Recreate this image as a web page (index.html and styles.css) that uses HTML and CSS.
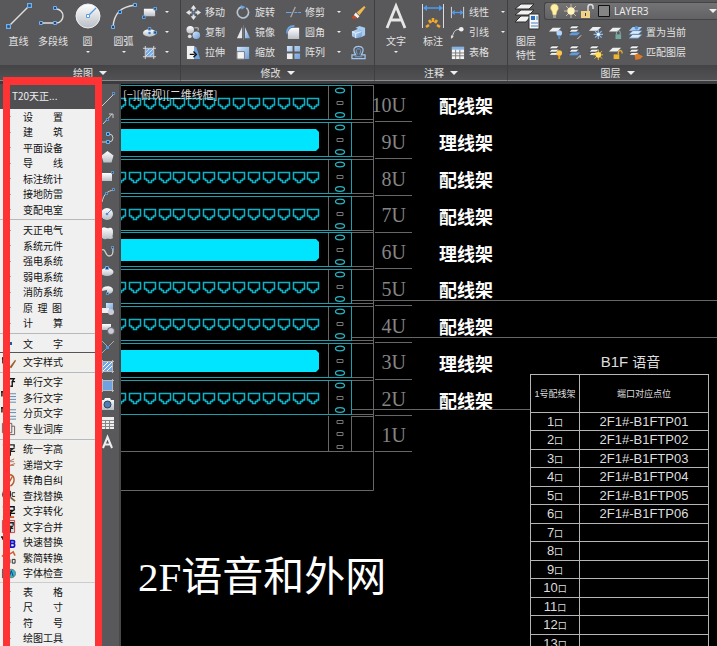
FILE: index.html
```html
<!DOCTYPE html>
<html lang="zh-CN">
<head>
<meta charset="utf-8">
<title>T20天正电气</title>
<link rel="stylesheet" href="styles.css">
</head>
<body>
<svg class="defs" aria-hidden="true">
  <defs>
    <linearGradient id="ball" x1="0" y1="0" x2="0" y2="1"><stop offset="0" stop-color="#fff"/><stop offset="1" stop-color="#b9bec6"/></linearGradient>
    <linearGradient id="blue" x1="0" y1="0" x2="1" y2="1"><stop offset="0" stop-color="#d3e6fb"/><stop offset="1" stop-color="#6d9fd8"/></linearGradient>
    <symbol id="node" viewBox="0 0 4 4"><path d="M.5.5h3v3h-3z" fill="#24486e" stroke="#6fb0f2"/></symbol>
    <symbol id="layers" viewBox="0 0 14 14"><path d="M4 1h8L9 4H1zM4 4.500h8L9 7.500H1zM4 8h8l-3 3H1z" fill="#eef0f2" stroke="#333" stroke-width=".6"/></symbol>
    <symbol id="port" viewBox="0 0 14 13"><path d="M1.500 1.500h11v6.500h-2v1.500h-2v2h-3v-2h-2V8h-2z" fill="none" stroke="#0bb3c8" stroke-width="1.500"/></symbol>
    <g id="ports">
      <use href="#port" x="-8" width="14" height="13"/><use href="#port" x="7" width="14" height="13"/><use href="#port" x="22" width="14" height="13"/><use href="#port" x="37" width="14" height="13"/><use href="#port" x="51" width="14" height="13"/><use href="#port" x="66" width="14" height="13"/><use href="#port" x="81" width="14" height="13"/><use href="#port" x="96" width="14" height="13"/><use href="#port" x="111" width="14" height="13"/><use href="#port" x="126" width="14" height="13"/><use href="#port" x="141" width="14" height="13"/><use href="#port" x="156" width="14" height="13"/><use href="#port" x="171" width="14" height="13"/><use href="#port" x="185" width="14" height="13"/>
    </g>
    <g id="frame" fill="none">
      <path d="M230 .5h22.500v34H230M207.500 0v35" stroke="#666"/>
      <path d="M0 .5h230.500M0 34.500h230.500M230.500 0v35" stroke="#1d9fae"/>
      <path d="M216 16.500h6v3h-6z" stroke="#777"/>
      <ellipse cx="219" cy="5.500" rx="4.500" ry="2.300" stroke="#26b4c2" stroke-width="1.300"/>
      <ellipse cx="219" cy="30" rx="4.500" ry="2.300" stroke="#26b4c2" stroke-width="1.300"/>
    </g>
    <g id="patch"><use href="#frame"/><use href="#ports" y="12"/></g>
    <g id="manager"><use href="#frame"/><path d="M0 7h195l3 3v16l-3 3H0z" fill="#00e5ff"/></g>
  </defs>
</svg>

<header class="ribbon">
  <section class="panel panel-draw" aria-label="绘图">
    <div class="tools tools-draw">
      <button class="big"><svg viewBox="0 0 28 28"><path d="M4 24 24 4" stroke="#ddd" stroke-width="1.400"/><use href="#node" x="1" y="22" width="5" height="5"/><use href="#node" x="22" y="1" width="5" height="5"/></svg><span>直线</span></button>
      <button class="big"><svg viewBox="0 0 28 28"><path d="M2 21h15a7 7 0 0 0 0-14" fill="none" stroke="#ddd" stroke-width="1.400"/><use href="#node" x="0" y="19" width="4" height="4"/><use href="#node" x="14" y="19" width="4" height="4"/><use href="#node" x="14" y="4" width="4" height="4"/></svg><span>多段线</span></button>
      <button class="big"><svg viewBox="0 0 28 28"><circle cx="14" cy="14" r="12" fill="url(#ball)" stroke="#eee"/><path d="m14 14 8-8" stroke="#5b9be0" stroke-width="1.300"/><path d="M12.500 12.500h3v3h-3z" fill="#fff" stroke="#5b9be0"/></svg><span>圆</span><i class="arrow"></i></button>
      <button class="big"><svg viewBox="0 0 28 28"><path d="M3 25C4 11 11 5 25 3" fill="none" stroke="#ddd" stroke-width="1.400"/><use href="#node" x="1" y="23" width="4" height="4"/><use href="#node" x="8" y="8" width="4" height="4"/><use href="#node" x="23" y="1" width="4" height="4"/></svg><span>圆弧</span><i class="arrow"></i></button>
      <div class="stack">
        <button class="small" aria-label="矩形"><svg viewBox="0 0 16 16"><path d="M2 4h12v8H2z" fill="url(#ball)"/><use href="#node" x="0" y="11" width="4" height="4"/><use href="#node" x="12" y="2" width="4" height="4"/></svg><i class="arrow"></i></button>
        <button class="small" aria-label="椭圆"><svg viewBox="0 0 16 16"><ellipse cx="8" cy="8.500" rx="7" ry="4" fill="url(#ball)"/><circle cx="8" cy="8.500" r="1.300" fill="#3e7fca"/><use href="#node" x="6" y="2" width="4" height="4"/><use href="#node" x="12" y="6" width="4" height="4"/></svg><i class="arrow"></i></button>
        <button class="small" aria-label="图案填充"><svg viewBox="0 0 16 16"><path d="M4 4h8v8H4z" fill="#76a8e4"/><path d="m4 8 4-4M4 12l8-8M8 12l4-4" stroke="#d6e8ff"/><path d="M3.500 1v14M12.500 1v14M1 3.500h14M1 12.500h14" stroke="#ddd"/></svg><i class="arrow"></i></button>
      </div>
    </div>
    <h2 class="title">绘图<i class="arrow wide"></i></h2>
  </section>

  <section class="panel panel-modify" aria-label="修改">
    <div class="tools tools-modify">
      <button class="small"><svg viewBox="0 0 16 16"><path d="M8 0 5 4h2v2h2V4h2zM8 16l-3-4h2v-2h2v2h2zM0 8l4-3v2h2v2H4v2zM16 8l-4-3v2h-2v2h2v2z" fill="#e4e6e9"/><path d="M7 7h2v2H7z" fill="#4d93e0"/></svg><span>移动</span></button>
      <button class="small"><svg viewBox="0 0 16 16"><path d="M11 3a6 6 0 1 1-5-1" fill="none" stroke="#b9c5d4" stroke-width="1.700"/><path d="m5 0 5 2-4 3z" fill="#6aa5e8"/></svg><span>旋转</span></button>
      <button class="small"><svg viewBox="0 0 16 16"><path d="M0 8h6M9 8h3M13 8h3" stroke="#6aa5e8" stroke-width="1.300"/><path d="M5 13 10 2" stroke="#aaa" stroke-width="1.300"/></svg><span>修剪</span><i class="arrow"></i></button>
      <button class="small" aria-label="删除"><svg viewBox="0 0 16 16"><path d="m6 8 8-7 1.500 1.500L9 11z" fill="#f0b84f"/><path d="M5 8 9 12l-2 2-4-3z" fill="#f4f4f4"/><path d="m3 11 4 3-5 1-1-2z" fill="#cf4920"/></svg></button>
      <button class="small"><svg viewBox="0 0 16 16"><circle cx="4.500" cy="5" r="4" fill="url(#ball)"/><circle cx="11" cy="11" r="4" fill="url(#blue)"/><circle cx="4" cy="12" r="2" fill="#ddd"/><path d="M9 3h4v3" fill="none" stroke="#ccc"/></svg><span>复制</span></button>
      <button class="small"><svg viewBox="0 0 16 16"><path d="M6.500 2v12H1z" fill="#e4e6e9"/><path d="M9.500 2v12H15z" fill="url(#blue)"/><path d="M8 0v16" stroke="#777"/></svg><span>镜像</span></button>
      <button class="small"><svg viewBox="0 0 16 16"><path d="M2 15V9c0-4 3-6 6-6h6v12z" fill="url(#ball)"/><path d="M1 9c0-5 3-8 8-8" fill="none" stroke="#6aa5e8" stroke-width="1.800"/></svg><span>圆角</span><i class="arrow"></i></button>
      <button class="small" aria-label="分解"><svg viewBox="0 0 16 16"><path d="m1 7 7-3 3 2v7l-6 1-4-2z" fill="url(#blue)"/><path d="m5 3 4-2 6 2v8l-4 2V6z" fill="#a6cbf4"/><path d="M1 7l4 2v5M5 9l6-2" fill="none" stroke="#e3efff"/></svg></button>
      <button class="small"><svg viewBox="0 0 16 16"><path d="M1 1h8v14H1z" fill="#f2f2f2"/><path d="M9 2h2l4 13H9z" fill="#6ca4e2"/><path d="M4 10h5M8 7l3 3-3 3" fill="none" stroke="#111" stroke-width="1.500"/></svg><span>拉伸</span></button>
      <button class="small"><svg viewBox="0 0 16 16"><path d="M1 2h13v13H1z" fill="url(#blue)"/><path d="M1 7h8v8H1z" fill="#f3f3f3" stroke="#777"/></svg><span>缩放</span></button>
      <button class="small"><svg viewBox="0 0 16 16"><path d="M1 1h6v6H1zM9 1h6v6H9zM9 9h6v6H9z" fill="url(#blue)"/><path d="M1 9h6v6H1z" fill="#eee"/></svg><span>阵列</span><i class="arrow"></i></button>
      <button class="small" aria-label="偏移"><svg viewBox="0 0 16 16"><path d="M1 14.500v-4h4C1 4 4 1.500 8 1.500S15 4 11 10.500h4v4z" fill="none" stroke="#a5c7ee" stroke-width="1.300"/><path d="M4 12.500h8M7 10C4.500 6 6 4 8 4s3.500 2 1 6" fill="none" stroke="#6aa5e8"/></svg></button>
    </div>
    <h2 class="title">修改<i class="arrow wide"></i></h2>
  </section>

  <section class="panel panel-note" aria-label="注释">
    <div class="tools tools-note">
      <button class="big"><svg viewBox="0 0 28 28"><path d="M5 26 14 4 23 26M8.500 18h11" fill="none" stroke="#e6e6e6" stroke-width="2.800"/></svg><span>文字</span><i class="arrow"></i></button>
      <button class="big"><svg viewBox="0 0 28 28"><path d="M3.500 2v24M24.500 2v24" stroke="#ddd"/><path d="M5 6h18" stroke="#4e9bf0" stroke-width="1.500"/><path d="m4 6 4-3v6zM24 6l-4-3v6z" fill="#4e9bf0"/><path d="m7 25 3-2M10 18l2 3M14 16v4M18 18l-2 3M21 25l-3-2" stroke="#f2aa28" stroke-width="2.600"/></svg><span>标注</span></button>
      <div class="stack">
        <button class="small"><svg viewBox="0 0 16 16"><path d="M1.500 2v12M14.500 2v12" stroke="#ddd"/><path d="M2 8h12" stroke="#4e9bf0" stroke-width="1.400"/><path d="m2 8 3-3v6zM14 8l-3-3v6z" fill="#4e9bf0"/></svg><span>线性</span><i class="arrow"></i></button>
        <button class="small"><svg viewBox="0 0 16 16"><path d="M2 14C4 7 5 5 10 4.500" fill="none" stroke="#ddd"/><circle cx="12" cy="4.500" r="2.500" fill="#eee"/><path d="m1 15 0-4 3 1z" fill="#ddd"/></svg><span>引线</span><i class="arrow"></i></button>
        <button class="small"><svg viewBox="0 0 16 16"><path d="M2 2h13v13H2z" fill="#f5f5f5"/><path d="M2 2h13v3H2z" fill="#84b3e8"/><path d="M2 8.500h13M2 11.500h13M6 5v10M10.500 5v10" stroke="#777"/></svg><span>表格</span></button>
      </div>
    </div>
    <h2 class="title">注释<i class="arrow wide"></i></h2>
  </section>

  <section class="panel panel-layer" aria-label="图层">
    <div class="tools tools-layer">
      <button class="big"><svg viewBox="0 0 28 28"><path d="M9 2h13l-5 5H3zM9 8h13l-5 5H3zM9 14h10l-5 6H3z" fill="#f2f2f2" stroke="#2d2d2d"/><path d="M17 12h10v15H17z" fill="#f6f6f6" stroke="#333"/><path d="M19 14h4v4h-4z" fill="#2c70c0"/><path d="M24 15h2M24 17h2M19 21h7M19 24h7" stroke="#4681bd"/></svg><span>图层<br>特性</span></button>
      <div class="layer-box">
        <label class="combo">
          <svg viewBox="0 0 64 16"><path d="M7 1a4 4 0 0 0-2 7l1 4h3l1-4a4 4 0 0 0-3-7z" fill="#fff0a4" stroke="#d3bc67" stroke-width=".6"/><path d="M6 12h3v3H6z" fill="#9b9b9b"/><path d="M24 1v14M17 8h14M19 3l10 10M29 3 19 13" stroke="#c7bda0"/><circle cx="24" cy="8" r="3.700" fill="#fff4ba"/><path d="M34 8h9v7h-9z" fill="#f1d386"/><path d="M41 8V4a2.500 2.500 0 0 1 5 0v2" fill="none" stroke="#ddd" stroke-width="1.500"/><path d="M38 10h1v3h-1z" fill="#444"/><path d="M51.500 2.500h11v11h-11z" fill="#858585" stroke="#111"/></svg>
          <select aria-label="图层"><option>LAYER3</option></select><i class="arrow wide"></i>
        </label>
        <div class="layer-row">
          <button aria-label="关闭"><svg viewBox="0 0 16 16"><path d="M5 3h9l-4 4H1z" fill="#eee"/><circle cx="12" cy="8.500" r="3" fill="#b1d5fa"/><path d="M12 11v4" stroke="#4e8bce" stroke-width="2"/></svg></button>
          <button aria-label="隔离"><svg viewBox="0 0 16 16"><use href="#layers" width="14" height="14"/><path d="M4 8h9l-3 3H1z" fill="#5b9be0"/><path d="m10 15 4-4" stroke="#ddd"/></svg></button>
          <button aria-label="冻结"><svg viewBox="0 0 16 16"><path d="M5 2h9l-4 4H1z" fill="#eee"/><path d="M11 5v10M6 10h10M7.500 6.500l7 7M14.500 6.500l-7 7" stroke="#8bbdf0" stroke-width="1.300"/><circle cx="11" cy="10" r="1.500" fill="#fff"/></svg></button>
          <button aria-label="锁定"><svg viewBox="0 0 16 16"><path d="M5 3h9l-4 4H1z" fill="#eee"/><path d="M8 10h6v5H8z" fill="#72aaa0"/><path d="M9 10V8a2 2 0 0 1 4 0v2" fill="none" stroke="#91bdb6"/></svg></button>
          <button class="named"><svg viewBox="0 0 16 16"><path d="M5 2h10l-4 4H1z" fill="#a8ccf5"/><path d="M5 6h10l-4 4H1zM5 10h10l-4 4H1z" fill="#dceafa" stroke="#4d7fae" stroke-width=".7"/><circle cx="9" cy="3" r="2" fill="#5495de"/></svg><span>置为当前</span></button>
        </div>
        <div class="layer-row">
          <button aria-label="打开"><svg viewBox="0 0 16 16"><use href="#layers" width="14" height="14"/><circle cx="12" cy="8.500" r="3" fill="#ffc44c"/><path d="M12 11v4" stroke="#f3a51c" stroke-width="2"/></svg></button>
          <button aria-label="取消隔离"><svg viewBox="0 0 16 16"><use href="#layers" width="14" height="14"/><path d="M4 8h9l-3 3H1z" fill="#5b9be0"/><path d="m9 15 4-4v3" fill="none" stroke="#ddd"/></svg></button>
          <button aria-label="解冻"><svg viewBox="0 0 16 16"><use href="#layers" width="14" height="14"/><path d="M11 5v11M5.500 10.500h11M7 6.500l8 8M15 6.500l-8 8" stroke="#f3bb2f"/><circle cx="11" cy="10.500" r="3" fill="#ffe05c"/></svg></button>
          <button aria-label="解锁"><svg viewBox="0 0 16 16"><path d="M5 3h9l-4 4H1z" fill="#eee"/><path d="M6 10h6v5H6z" fill="#efb52e"/><path d="M11 10V8a2 2 0 0 1 4 0v1" fill="none" stroke="#efb52e" stroke-width="1.300"/></svg></button>
          <button class="named"><svg viewBox="0 0 16 16"><use href="#layers" width="14" height="14"/><path d="m7 11 3-2 6 3-3 3-5 1z" fill="#d77929"/></svg><span>匹配图层</span></button>
        </div>
      </div>
    </div>
    <h2 class="title">图层<i class="arrow wide"></i></h2>
  </section>
</header>

<main class="work">
  <aside class="palette">
    <h1 class="palette-head">T20天正...</h1>
    <ul class="menu">
      <li><button>设　　置</button></li>
      <li><button>建　　筑</button></li>
      <li><button>平面设备</button></li>
      <li><button>导　　线</button></li>
      <li><button>标注统计</button></li>
      <li><button>接地防雷</button></li>
      <li><button>变配电室</button></li>
      <li class="sep" role="separator"></li>
      <li><button>天正电气</button></li>
      <li><button>系统元件</button></li>
      <li><button>强电系统</button></li>
      <li><button>弱电系统</button></li>
      <li><button>消防系统</button></li>
      <li><button>原&nbsp;&nbsp;理&nbsp;&nbsp;图</button></li>
      <li><button>计　　算</button></li>
      <li class="sep" role="separator"></li>
      <li class="open"><button>文　　字</button></li>
      <li class="sep dark" role="separator"></li>
      <li class="sub"><svg viewBox="0 0 16 16"><path d="M1 4h3M2 2v7" stroke="#222" stroke-width="1.500"/><path d="m9 13 6-8 1 1-5 8z" fill="#9a6132"/></svg><button>文字样式</button></li>
      <li class="sep" role="separator"></li>
      <li class="sub"><svg viewBox="0 0 16 16"><path d="M9 4h5l-2 3h3M12 7v5h-2" fill="none" stroke="#111" stroke-width="1.400"/></svg><button>单行文字</button></li>
      <li class="sub"><svg viewBox="0 0 16 16"><path d="M0 2h3M1 1v6" stroke="#111" stroke-width="1.500"/><path d="M8 4h8M8 7h8M8 10h8M8 13h8" stroke="#5b88b0"/></svg><button>多行文字</button></li>
      <li class="sub"><svg viewBox="0 0 16 16"><path d="M0 2h3M1 1v6" stroke="#111" stroke-width="1.500"/><path d="M8 4h8M8 7h8M8 11h8M8 14h8" stroke="#5b88b0"/></svg><button>分页文字</button></li>
      <li class="sub"><svg viewBox="0 0 16 16"><path d="M1.500 2.500h10v10h-10zM11.500 5.500h3v9h-8v-2" fill="none" stroke="#6d5961"/></svg><button>专业词库</button></li>
      <li class="sep" role="separator"></li>
      <li class="sub"><svg viewBox="0 0 16 16"><path d="M2 3h12v3M5 7h8l-3 2v5H8M4 10h11M3 14h4" fill="none" stroke="#222" stroke-width="1.400"/></svg><button>统一字高</button></li>
      <li class="sub"><svg viewBox="0 0 16 16"><path d="M2 5h12M5 9h9M9 9v5" stroke="#8e8580" fill="none"/><path d="m8 5 6-3M9 9l6-2" stroke="#d65a30"/></svg><button>递增文字</button></li>
      <li class="sub"><svg viewBox="0 0 16 16"><path d="M8 2c7-1 8 8 2 12M8 11l4-7" fill="none" stroke="#b65b2f" stroke-width="1.500"/></svg><button>转角自纠</button></li>
      <li class="sub"><svg viewBox="0 0 16 16"><circle cx="6" cy="7" r="5" fill="#555"/><path d="m10 10 5 4" stroke="#865a28" stroke-width="2"/><path d="M15 5h-3v4h3M10 3v6" stroke="#222" fill="none"/></svg><button>查找替换</button></li>
      <li class="sub"><svg viewBox="0 0 16 16"><path d="M2 3h12v3M5 7h8l-3 2v4H8M4 10h11" fill="none" stroke="#111" stroke-width="1.500"/><path d="M2 14h12" stroke="#d65a30" stroke-width="2"/></svg><button>文字转化</button></li>
      <li class="sub"><svg viewBox="0 0 16 16"><path d="M1.500 1.500h13v13h-13z" fill="#d9d9d9" stroke="#c33b48"/><path d="M4 4h9v3M6 8h6l-2 2v4M5 10h8" fill="none" stroke="#222" stroke-width="1.400"/></svg><button>文字合并</button></li>
      <li class="sub"><svg viewBox="0 0 16 16"><path d="M0 2h2v3" stroke="#222" stroke-width="1.500"/><path d="M10 6h3c2 0 2 3 0 3 2 0 2 4 0 4h-3zM10 9h3" fill="none" stroke="#1414c5" stroke-width="1.800"/></svg><button>快速替换</button></li>
      <li class="sub"><svg viewBox="0 0 16 16"><path d="m1 7 5-5 4 2 3-2 2 4" fill="none" stroke="#d65a30" stroke-width="1.600"/><path d="M9.500 10v4M12 10h3v4h-3z" fill="none" stroke="#222"/></svg><button>繁简转换</button></li>
      <li class="sub"><svg viewBox="0 0 16 16"><path d="M1 3h9v10H1z" fill="#50656e"/><circle cx="11" cy="8" r="4.500" fill="#27b8cc" stroke="#777"/><path d="m9 11 2-6 2 6" fill="none" stroke="#1b387a"/></svg><button>字体检查</button></li>
      <li class="sep light" role="separator"></li>
      <li><button>表　　格</button></li>
      <li><button>尺　　寸</button></li>
      <li><button>符　　号</button></li>
      <li><button>绘图工具</button></li>
    </ul>
    <div class="highlight"></div>
  </aside>

  <nav class="toolbar" aria-label="绘图工具">
    <button aria-label="直线"><svg viewBox="0 0 14 16"><path d="M0 14 12 2" stroke="#ccc"/><use href="#node" x="10" y="0" width="3" height="3"/></svg></button>
    <button aria-label="构造线"><svg viewBox="0 0 14 16"><path d="m1 13 9-10M7 3h4v4" fill="none" stroke="#ccc"/><use href="#node" x="4" y="7" width="3" height="3"/></svg></button>
    <button aria-label="多段线"><svg viewBox="0 0 14 16"><path d="M0 12h7a4 4 0 0 0 0-8H4" fill="none" stroke="#ccc"/><use href="#node" x="4" y="2" width="4" height="4"/><use href="#node" x="4" y="10" width="4" height="4"/></svg></button>
    <button aria-label="多边形"><svg viewBox="0 0 14 16"><path d="m5.500 2 6 4.500-2 7h-8L-.5 6.500z" fill="url(#ball)"/></svg></button>
    <button aria-label="矩形"><svg viewBox="0 0 14 16"><path d="M0 5h10v8H0z" fill="url(#ball)"/><use href="#node" x="9" y="3" width="3" height="3"/></svg></button>
    <button aria-label="圆弧"><svg viewBox="0 0 14 16"><path d="M0 15C2 7 5 4 12 3" fill="none" stroke="#ccc"/><use href="#node" x="3" y="5" width="3" height="3"/><use href="#node" x="10" y="1" width="3" height="3"/></svg></button>
    <button aria-label="圆"><svg viewBox="0 0 14 16"><circle cx="5" cy="8" r="6" fill="url(#ball)"/><path d="m5 8 4-4" stroke="#4e8fd8"/><circle cx="5" cy="8" r="1.300" fill="#4e8fd8"/></svg></button>
    <button aria-label="修订云线"><svg viewBox="0 0 14 16"><path d="M0 3c3-2 4 1 7 0s4 1 4 4-1 4 0 6c-3 2-5 0-7 1s-3-1-4-1z" fill="url(#ball)"/></svg></button>
    <button aria-label="样条曲线"><svg viewBox="0 0 14 16"><path d="M0 6c4-2 3 6 7 6s4-3 4-8" fill="none" stroke="#ccc" stroke-width="1.300"/><use href="#node" x="9" y="2" width="3" height="3"/></svg></button>
    <button aria-label="椭圆"><svg viewBox="0 0 14 16"><ellipse cx="5" cy="9" rx="6.500" ry="4" fill="url(#ball)"/><use href="#node" x="3" y="3" width="4" height="4"/></svg></button>
    <button aria-label="椭圆弧"><svg viewBox="0 0 14 16"><path d="M0 9c-1-6 11-6 11-1 0 3-3 4-6 4V8z" fill="url(#ball)"/><use href="#node" x="4" y="10" width="3" height="3"/></svg></button>
    <button aria-label="插入块"><svg viewBox="0 0 14 16"><path d="M4 2h7v9H4z" fill="url(#blue)"/><path d="M0 7h7v5H0z" fill="#eee"/><circle cx="9" cy="11" r="3" fill="#ccd"/></svg></button>
    <button aria-label="创建块"><svg viewBox="0 0 14 16"><path d="M0 4h9v6H0z" fill="url(#ball)"/><circle cx="9" cy="11" r="3.500" fill="#ccd" stroke="#666"/></svg></button>
    <button aria-label="点"><svg viewBox="0 0 14 16"><path d="m0 2 6 6 6-6M6 8l-6 6" fill="none" stroke="#aaa"/><path d="M4 7h3v3H4z" fill="#5294df"/></svg></button>
    <button aria-label="图案填充"><svg viewBox="0 0 14 16"><path d="M1 4h9v9H1z" fill="#76a8e4"/><path d="m1 9 5-5M1 13l9-9M5 13l5-5" stroke="#fff"/><path d="M.5 2v13M10.500 2v13M0 3.500h12M0 13.500h12" stroke="#bbb"/></svg></button>
    <button aria-label="面域"><svg viewBox="0 0 14 16"><path d="M1 4h9v9H1z" fill="#6fa2df"/><path d="M.5 2v13M10.500 2v13M0 3.500h12M0 13.500h12" stroke="#bbb"/></svg></button>
    <button aria-label="相机"><svg viewBox="0 0 14 16"><path d="M0 4h2l1-2h5l1 2h3v10H0z" fill="url(#ball)"/><circle cx="5.500" cy="8.500" r="3.500" fill="#4f7eb5" stroke="#345"/></svg></button>
    <button aria-label="表格"><svg viewBox="0 0 14 16"><path d="M0 2h12v12H0z" fill="#eee"/><path d="M0 5.500h12M0 8.500h12M0 11.500h12M3.500 5v9M7.500 5v9" stroke="#888"/></svg></button>
    <button aria-label="多行文字"><svg viewBox="0 0 14 16"><path d="M1 14 5.500 3 10 14M3 10.500h5" fill="none" stroke="#eee" stroke-width="2"/></svg></button>
  </nav>

  <section class="canvas" aria-label="模型空间">
    <svg class="drawing" viewBox="0 0 596 562">
      <use href="#patch" y="1"/><use href="#manager" y="38"/><use href="#patch" y="75"/><use href="#patch" y="112"/><use href="#manager" y="148"/><use href="#patch" y="185"/><use href="#patch" y="222"/><use href="#manager" y="259"/><use href="#patch" y="296"/>
      <g fill="none" stroke="#666">
        <path d="M252.500 1v405.500H0M0 367.500h253M207.500 332v35M230.500 332v35M230 332.500h22"/>
        <path d="M216 336.500h6v3h-6zM216 348.500h6v3h-6zM216 361.500h6v3h-6z" stroke="#777"/>
        <path d="M254 37.500h37M254 74.500h37M254 111.500h37M254 148.500h37M254 184.500h37M254 221.500h37M254 258.500h37M254 295.500h37M254 331.500h37M254 367.500h37"/>
        <path d="M231 216.500h365M231 253.500h365M231 325.500h179"/>
      </g>
      <g class="unit">
        <text x="285" y="28">10U</text><text x="285" y="65">9U</text><text x="285" y="102">8U</text><text x="285" y="138">7U</text><text x="285" y="175">6U</text><text x="285" y="212">5U</text><text x="285" y="249">4U</text><text x="285" y="285">3U</text><text x="285" y="322">2U</text><text x="285" y="358">1U</text>
      </g>
      <g class="device">
        <text x="318" y="29">配线架</text><text x="318" y="66">理线架</text><text x="318" y="103">配线架</text><text x="318" y="140">配线架</text><text x="318" y="177">理线架</text><text x="318" y="213">配线架</text><text x="318" y="250">配线架</text><text x="318" y="287">理线架</text><text x="318" y="324">配线架</text>
      </g>
      <text class="view" x="2" y="15">[−][俯视][二维线框]</text>
      <text class="heading" x="17" y="507">2F语音和外网</text>
    </svg>
    <table class="schedule">
      <caption>B1F <span>语音</span></caption>
      <thead><tr><th>1号配线架</th><th>端口对应点位</th></tr></thead>
      <tbody>
        <tr><td>1<small>口</small></td><td>2F1#-B1FTP01</td></tr>
        <tr><td>2<small>口</small></td><td>2F1#-B1FTP02</td></tr>
        <tr><td>3<small>口</small></td><td>2F1#-B1FTP03</td></tr>
        <tr><td>4<small>口</small></td><td>2F1#-B1FTP04</td></tr>
        <tr><td>5<small>口</small></td><td>2F1#-B1FTP05</td></tr>
        <tr><td>6<small>口</small></td><td>2F1#-B1FTP06</td></tr>
        <tr><td>7<small>口</small></td><td></td></tr>
        <tr><td>8<small>口</small></td><td></td></tr>
        <tr><td>9<small>口</small></td><td></td></tr>
        <tr><td>10<small>口</small></td><td></td></tr>
        <tr><td>11<small>口</small></td><td></td></tr>
        <tr><td>12<small>口</small></td><td></td></tr>
        <tr><td>13<small>口</small></td><td></td></tr>
      </tbody>
    </table>
  </section>
</main>
</body>
</html>
```
FILE: styles.css
```css
* { box-sizing: border-box; }

body {
  margin: 0;
  height: 100vh;
  overflow: hidden;
  display: flex;
  flex-direction: column;
  background: #58585a;
  color: #e2e2e2;
  font: 10px/14px "Noto Sans CJK SC", "Liberation Sans", sans-serif;
}

.defs { position: absolute; width: 0; height: 0; }

button {
  margin: 0;
  padding: 0;
  border: 0;
  background: none;
  color: inherit;
  font: inherit;
  text-align: left;
  white-space: nowrap;
}

h1, h2 { margin: 0; font-size: 10px; font-weight: 400; }

.arrow {
  border: 2px solid transparent;
  border-top-color: #eee;
  border-bottom-width: 0;
}

.arrow.wide { border-width: 4px 4px 0; }

/* Ribbon */
.ribbon {
  flex: none;
  display: flex;
  border-bottom: 3px solid #3c3c3e;
  background: #59595b;
}

.panel {
  display: flex;
  flex-direction: column;
  border-right: 1px solid #3f3f41;
  border-bottom: 1px solid #8a8a8c;
}

.panel-draw { width: 181px; }
.panel-modify { width: 194px; }
.panel-note { width: 133px; }
.panel-layer { flex: 1; border-right: 0; }

.tools { display: grid; height: 65px; padding-top: 2px; align-items: start; }
.tools-draw { grid-template-columns: 35px 34px 35px 37px 34px; padding-left: 1px; }
.tools-modify { grid-template-columns: 50px 50px 65px 20px; grid-auto-rows: 20px; padding-left: 5px; }
.tools-note { grid-template-columns: 40px 34px 54px; padding-left: 1px; }
.tools-layer { grid-template-columns: 34px 1fr; padding-left: 1px; }

.big { display: flex; flex-direction: column; align-items: center; line-height: 14px; }
.big svg { width: 28px; height: 28px; margin-bottom: 4px; }
.big .arrow { margin-top: 3px; }

.small { display: flex; align-items: center; height: 20px; gap: 4px; }
.small svg { width: 15px; height: 15px; flex: none; }
.small .arrow { margin-left: 4px; }
.small span + .arrow { margin-left: 8px; }

.title {
  display: flex;
  justify-content: center;
  align-items: center;
  gap: 6px;
  height: 15px;
  background: linear-gradient(#444446, #525254);
}

.panel-layer .title { padding-left: 10px; }

.layer-box { padding-left: 1px; }

.combo {
  display: flex;
  align-items: center;
  height: 18px;
  margin-bottom: 2px;
  border: 1px solid #444;
  border-right: 0;
  border-radius: 3px 0 0 3px;
  background: linear-gradient(#747476, #626264);
}

.combo svg { width: 64px; height: 16px; margin-left: 2px; }

.combo select {
  flex: 1;
  min-width: 0;
  margin-left: 3px;
  padding: 0;
  border: 0;
  appearance: none;
  background: none;
  color: #eee;
  font: 10px "Open Sans", sans-serif;
}

.layer-row { display: grid; grid-template-columns: repeat(4, 20px) 1fr; height: 20px; align-items: center; padding-left: 4px; }
.layer-row svg { display: block; width: 15px; height: 15px; flex: none; }
.named { display: flex; align-items: center; gap: 3px; }

/* Workspace */
.work { flex: 1; min-height: 0; display: flex; }

/* Menu palette */
.palette {
  position: relative;
  flex: none;
  width: 102px;
  display: flex;
  flex-direction: column;
  background: #f0f0f0;
  color: #111;
}

.palette-head {
  flex: none;
  height: 25px;
  padding: 5px 12px;
  background: #505053;
  color: #eee;
}

.menu {
  flex: 1;
  display: flex;
  flex-direction: column;
  margin: 0;
  padding: 0;
  list-style: none;
}

.menu li {
  flex: 1 1 15px;
  display: flex;
  align-items: center;
  padding-left: 9px;
}

.menu li::before { content: ""; width: 1px; height: 1px; margin: 0 12px 0 1px; background: #aaa; }
.menu li.sub { padding-left: 1px; background: #f0efeb; }
.menu li.sub::before { content: none; }
.menu li svg { width: 15px; height: 15px; margin-right: 7px; }
.menu li.open::before { width: 2px; height: 3px; margin-right: 11px; background: #1c5ca6; }

.menu li.sep { flex: 0 0 5px; padding: 0; background: linear-gradient(#b8b8b8, #b8b8b8) center / 100% 1px no-repeat; }
.menu li.sep::before { content: none; }
.menu li.dark { flex-basis: 3px; background-image: linear-gradient(#555, #555); }
.menu li.light { flex-basis: 3px; background-image: linear-gradient(#ccc, #ccc); }

.highlight {
  position: absolute;
  inset: -7px 0 -8px 3px;
  border: 7px solid #ff3333;
  border-top-width: 8px;
}

/* Docked tool strip */
.toolbar {
  flex: none;
  width: 19px;
  padding-top: 6px;
  display: flex;
  flex-direction: column;
  border-right: 2px solid #484849;
  background: #59595b;
}

.toolbar button { height: 19px; }
.toolbar svg { display: block; width: 14px; height: 16px; }

/* Model space */
.canvas {
  position: relative;
  flex: 1;
  min-width: 0;
  overflow: hidden;
  background: #000;
}

.drawing { display: block; width: 596px; height: 562px; }

.unit { fill: #858585; font: 20px "Liberation Serif", serif; text-anchor: end; }
.device { fill: #fff; font: 700 18px "Noto Sans CJK SC", sans-serif; }
.view { fill: #ddd; font: 11px "Noto Sans CJK SC", sans-serif; }
.heading { fill: #fff; font: 41px "Liberation Serif", "Noto Sans CJK SC", serif; }

.schedule {
  position: absolute;
  left: 409px;
  top: 266px;
  width: 179px;
  border-collapse: collapse;
  table-layout: fixed;
  color: #ddd;
  font: 13px/14px "Liberation Sans", "Noto Sans CJK SC", sans-serif;
  text-align: center;
}

.schedule caption { height: 24px; padding-left: 22px; font-size: 15px; line-height: 24px; }
.schedule caption span { font-size: 14px; }
.schedule th, .schedule td { padding: 0; border: 1px solid #b5b5b5; }
.schedule th { height: 38px; font-size: 9px; font-weight: 400; }
.schedule th:first-child { width: 49px; }
.schedule td { height: 18px; }
.schedule tr:nth-child(even) td { height: 19px; }
.schedule small { font-size: 9px; line-height: 9px; }
```
